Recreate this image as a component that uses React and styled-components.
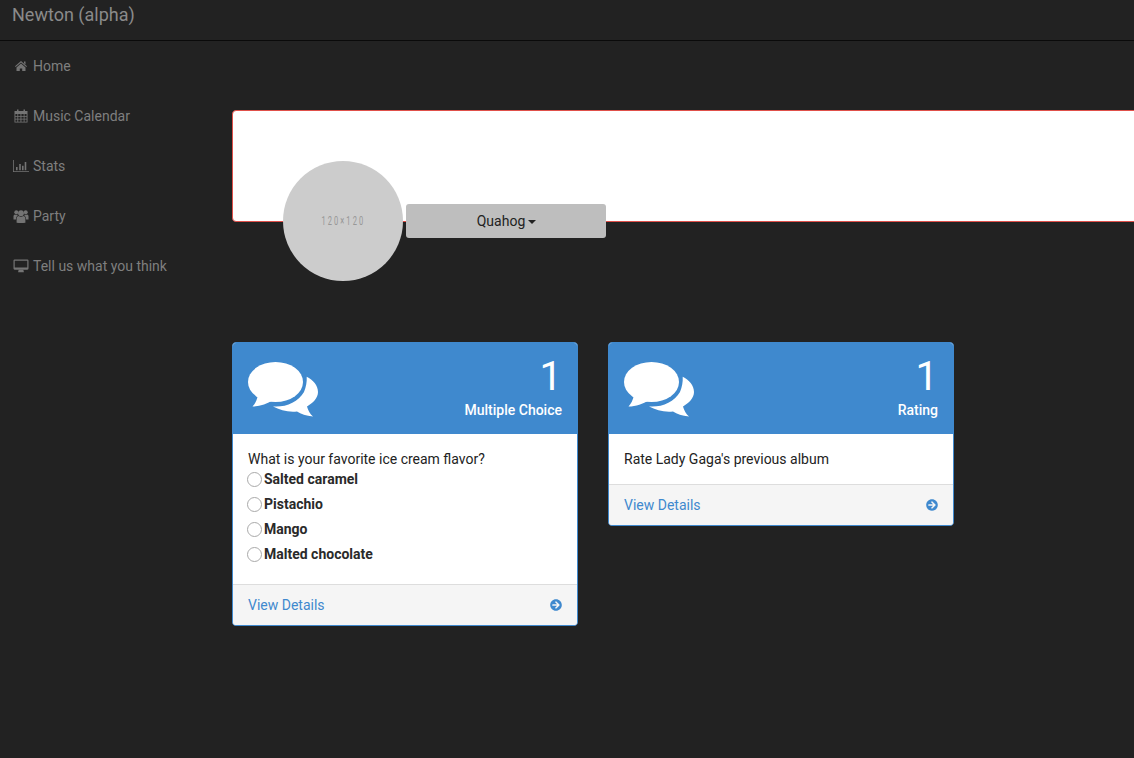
import React from 'react';
import styled, { createGlobalStyle } from 'styled-components';
import { FaArrowCircleRight } from 'react-icons/fa';

const Global = createGlobalStyle`
  html, body { margin: 0; padding: 0; background: #222222; height: 100%; overflow: hidden; }
  body { font-family: Roboto, "Liberation Sans", sans-serif; font-size: 14px; color: #222; }
  #root { height: 100%; }
`;

const Page = styled.div`
  width: 1134px;
  height: 758px;
  overflow: hidden;
  background: #222222;
`;

const NavBar = styled.header`
  height: 40px;
  border-bottom: 1px solid #0a0a0a;
  padding-left: 12px;
  display: flex;
  align-items: flex-start;
`;

const Brand = styled.div`
  font-size: 18px;
  line-height: 30px;
  color: #8a8a8a;
`;

const Columns = styled.div`
  display: flex;
  align-items: flex-start;
`;

const Sidebar = styled.nav`
  width: 232px;
  flex: none;
`;

const NavItem = styled.div`
  height: 50px;
  display: flex;
  align-items: center;
  padding-left: 13px;
  color: #7f7f7f;
  font-size: 14px;
`;

const SideIcon = styled.svg`
  width: 16px;
  height: 14px;
  margin-right: 4px;
  flex: none;
  fill: #747474;
  stroke: none;
`;

const Main = styled.main`
  flex: 1;
  min-width: 0;
  padding-top: 69px;
`;

const Banner = styled.div`
  height: 110px;
  margin-right: -20px;
  background: #fff;
  border: 1px solid #e0504a;
  border-radius: 4px;
`;

const ProfileRow = styled.div`
  display: flex;
  align-items: flex-start;
  margin-top: -61px;
  margin-left: 51px;
  position: relative;
`;

const Avatar = styled.div`
  width: 120px;
  height: 120px;
  border-radius: 50%;
  background: #cccccc;
  display: flex;
  align-items: center;
  justify-content: center;
  color: #979797;
  font-size: 12px;
  letter-spacing: 3.4px;
  span { display: block; transform: scaleX(0.62); white-space: nowrap; }
`;

const Dropdown = styled.div`
  width: 200px;
  height: 34px;
  margin: 43px 0 0 3px;
  background: #bebebe;
  border-radius: 3px;
  display: flex;
  align-items: center;
  justify-content: center;
  gap: 3px;
  color: #222;
  font-size: 14px;
  padding-left: 1px;
  box-sizing: border-box;
`;

const Caret = styled.span`
  width: 0;
  height: 0;
  margin-top: 1px;
  border-top: 4px solid #222;
  border-left: 4px solid transparent;
  border-right: 4px solid transparent;
`;

const Cards = styled.div`
  display: flex;
  align-items: flex-start;
  gap: 30px;
  margin-top: 61px;
`;

const Card = styled.section`
  width: 346px;
  background: #fff;
  border: 1px solid #3f89ce;
  border-radius: 4px;
  box-sizing: border-box;
  overflow: hidden;
`;

const CardHead = styled.div`
  height: 91px;
  background: #3f89ce;
  color: #fff;
  display: flex;
  justify-content: space-between;
  padding: 0 15px;
`;

const Bubbles = styled.svg`
  width: 70px;
  height: 56px;
  margin-top: 19px;
  fill: #fff;
`;

const Summary = styled.div`
  display: flex;
  flex-direction: column;
  align-items: flex-end;
`;

const Count = styled.div`
  font-size: 40px;
  line-height: 44px;
  margin-top: 12px;
`;

const Kind = styled.div`
  font-size: 14px;
  font-weight: 500;
  line-height: 20px;
  margin-top: 1px;
`;

const CardBody = styled.div`
  padding: 15px 15px ${p => (p.$tall ? '18px' : '15px')};
  line-height: 20px;
`;

const Question = styled.div`
  line-height: 20px;
`;

const Options = styled.div`
  margin-top: -3px;
`;

const Option = styled.label`
  display: flex;
  align-items: center;
  height: 25px;
  font-weight: 700;
  margin-left: -1px;
  color: #2a2a2a;
`;

const Radio = styled.span`
  width: 13px;
  height: 13px;
  border: 1px solid #a9a9a9;
  border-radius: 50%;
  background: #fff;
  margin: 2px 2px 0 0;
  flex: none;
`;

const CardFoot = styled.div`
  height: 40px;
  background: #f5f5f5;
  border-top: 1px solid #dddddd;
  display: flex;
  align-items: center;
  justify-content: space-between;
  padding: 0 15px;
  color: #3f89ce;
  svg { width: 12px; height: 12px; }
`;

const HomeIcon = () => (
  <SideIcon viewBox="0 0 16 14">
    <path d="M8 2 L14 7.3 L13.3 8.1 L8 3.5 L2.7 8.1 L2 7.3 Z" />
    <path d="M8 4.6 L12.5 8.4 V12 H9.2 V9.4 H6.8 V12 H3.5 V8.4 Z" />
    <path d="M11 2.5 H12.5 V5.6 L11 4.3 Z" />
  </SideIcon>
);

const CalendarIcon = () => (
  <SideIcon viewBox="0 0 16 14">
    <path fillRule="evenodd" d="M1.5 2 H14.5 V13.5 H1.5 Z M2.4 5 V6.9 H4.4 V5 Z M5.2 5 V6.9 H7.5 V5 Z M8.4 5 V6.9 H10.7 V5 Z M11.5 5 V6.9 H13.6 V5 Z M2.4 7.7 V9.7 H4.4 V7.7 Z M5.2 7.7 V9.7 H7.5 V7.7 Z M8.4 7.7 V9.7 H10.7 V7.7 Z M11.5 7.7 V9.7 H13.6 V7.7 Z M2.4 10.5 V12.7 H4.4 V10.5 Z M5.2 10.5 V12.7 H7.5 V10.5 Z M8.4 10.5 V12.7 H10.7 V10.5 Z M11.5 10.5 V12.7 H13.6 V10.5 Z" />
    <path d="M4 .5 H5.5 V3 H4 Z M10.5 .5 H12 V3 H10.5 Z" />
  </SideIcon>
);

const ChartIcon = () => (
  <SideIcon viewBox="0 0 16 14">
    <path d="M0 1 H.8 V12.2 H16 V13 H0 Z" />
    <path d="M3 8 H4.6 V11.3 H3 Z M6.2 5 H7.8 V11.3 H6.2 Z M9 6.8 H10.6 V11.3 H9 Z M11.7 3 H13.3 V11.3 H11.7 Z" />
  </SideIcon>
);

const UsersIcon = () => (
  <SideIcon viewBox="0 0 16 14">
    <circle cx="8" cy="4.2" r="2.9" />
    <circle cx="3.3" cy="3.2" r="2" />
    <circle cx="12.7" cy="3.2" r="2" />
    <path d="M3.6 13.7 V9.3 Q3.6 7.3 5.6 6.9 Q8 8.4 10.4 6.9 Q12.4 7.3 12.4 9.3 V13.7 Q8 14.3 3.6 13.7 Z" />
    <path d="M.5 10.4 V7.2 Q.5 5.6 2 5.4 Q3.3 6.1 4.6 5.6 Q4.7 6.3 4.5 6.8 Q3 7.3 2.9 10.4 Z" />
    <path d="M15.5 10.4 V7.2 Q15.5 5.6 14 5.4 Q12.7 6.1 11.4 5.6 Q11.3 6.3 11.5 6.8 Q13 7.3 13.1 10.4 Z" />
  </SideIcon>
);

const DesktopIcon = () => (
  <SideIcon viewBox="0 0 16 14">
    <path fillRule="evenodd" d="M1.6 .5 H14.4 Q15.5 .5 15.5 1.6 V9.6 Q15.5 10.7 14.4 10.7 H1.6 Q.5 10.7 .5 9.6 V1.6 Q.5 .5 1.6 .5 Z M1.7 1.7 V8.6 H14.3 V1.7 Z" />
    <path d="M5.7 10.7 H10.3 L10.8 12.5 V13.2 H5.2 V12.5 Z" />
  </SideIcon>
);

const BubblesIcon = () => (
  <Bubbles viewBox="0 0 70 56">
    <ellipse cx="27.5" cy="20" rx="27.5" ry="20" />
    <path d="M10 33 C9 38 7 42 4.5 44.5 C12 44.5 19 42 25 38 Z" />
    <path d="M58.7 14.7 C65 18 70 23 70 30 C70 36 65 41 59 44.5 C60 48 62 52 65 54.5 C58 54 53 52 49 49.5 C40 50.5 32 48 25 44.5 C38 45.5 50 40 56 30 C58 25 59 20 58.7 14.7 Z" />
  </Bubbles>
);

const QCard = ({ kind, tall, children }) => (
  <Card>
    <CardHead>
      <BubblesIcon />
      <Summary>
        <Count>1</Count>
        <Kind>{kind}</Kind>
      </Summary>
    </CardHead>
    <CardBody $tall={tall}>{children}</CardBody>
    <CardFoot>
      <span>View Details</span>
      <FaArrowCircleRight />
    </CardFoot>
  </Card>
);

const flavors = ['Salted caramel', 'Pistachio', 'Mango', 'Malted chocolate'];

export default function App() {
  return (
    <Page>
      <Global />
      <NavBar><Brand>Newton (alpha)</Brand></NavBar>
      <Columns>
        <Sidebar>
          <NavItem><HomeIcon />Home</NavItem>
          <NavItem><CalendarIcon />Music Calendar</NavItem>
          <NavItem><ChartIcon />Stats</NavItem>
          <NavItem><UsersIcon />Party</NavItem>
          <NavItem><DesktopIcon />Tell us what you think</NavItem>
        </Sidebar>
        <Main>
          <Banner />
          <ProfileRow>
            <Avatar><span>120×120</span></Avatar>
            <Dropdown>Quahog <Caret /></Dropdown>
          </ProfileRow>
          <Cards>
            <QCard kind="Multiple Choice" tall>
              <Question>What is your favorite ice cream flavor?</Question>
              <Options>
                {flavors.map(f => (
                  <Option key={f}><Radio />{f}</Option>
                ))}
              </Options>
            </QCard>
            <QCard kind="Rating">
              <Question>Rate Lady Gaga's previous album</Question>
            </QCard>
          </Cards>
        </Main>
      </Columns>
    </Page>
  );
}
